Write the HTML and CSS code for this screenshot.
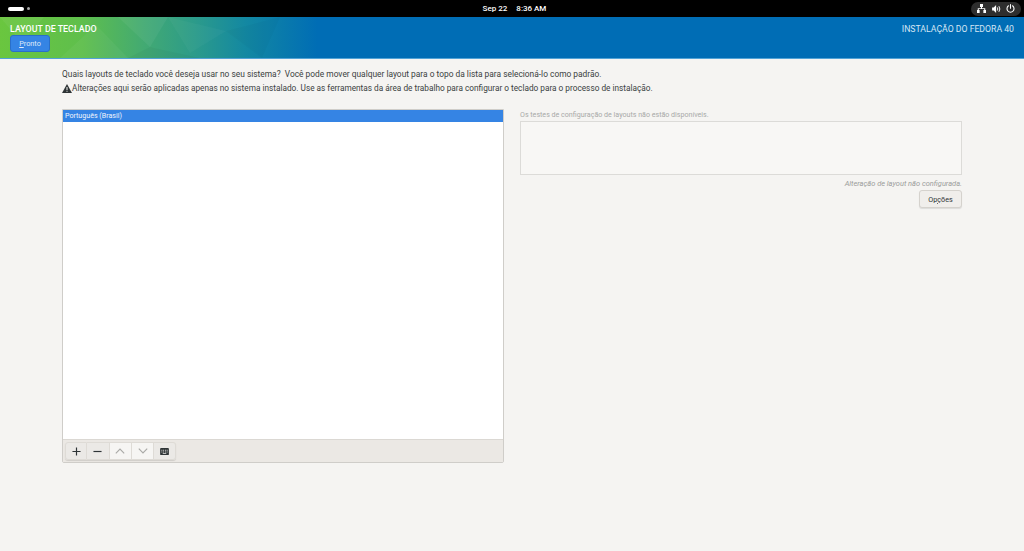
FILE: index.html
```html
<!DOCTYPE html>
<html lang="pt-BR">
<head>
    <meta charset="UTF-8">
    <meta name="viewport" content="width=device-width, initial-scale=1.0">
    <title>Layout de teclado</title>
    <link rel="stylesheet" href="styles.css">
</head>
<body>

    <!-- GNOME top bar -->
    <div class="topbar">
        <div class="workspaces"><span class="ws-active"></span><span class="ws-dot"></span></div>
        <div class="clock"><span>Sep 22</span><span>8:36 AM</span></div>
        <div class="tray">
            <svg width="9" height="9" viewBox="0 0 12 12"><path fill="#fff" d="M4 0h4v4H6.700v1.500H11V8h1v4H8.500V8h1.100V6.800H2.400V8h1.100v4H0V8h1V5.500h4.300V4H4z"/></svg>
            <svg width="9" height="8" viewBox="0 0 11 10"><path fill="#fff" d="M0 3h2l3-3v10L2 7H0z"/><path fill="none" stroke="#fff" stroke-width="1.200" d="M6.500 3q1.300 2 0 4M8.500 1.500q2.400 3.500 0 7"/></svg>
            <svg width="9" height="9" viewBox="0 0 11 11"><path fill="none" stroke="#fff" stroke-width="1.300" stroke-linecap="round" d="M5.500 .8v4.400M3 2.200a4.300 4.300 0 1 0 5 0"/></svg>
        </div>
    </div>

    <!-- Header -->
    <div class="header">
        <!-- faint polygon texture of the sidebar artwork -->
        <svg class="header-art" width="320" height="41" viewBox="0 0 320 41">
            <polygon fill="#fff" fill-opacity="0.05" points="0,0 44,0 22,26"/>
            <polygon fill="#fff" fill-opacity="0.04" points="60,41 96,8 128,41"/>
            <polygon fill="#fff" fill-opacity="0.05" points="118,0 168,0 150,30"/>
            <polygon fill="#000" fill-opacity="0.03" points="150,30 200,41 128,41"/>
            <polygon fill="#fff" fill-opacity="0.03" points="168,0 226,14 190,36"/>
            <polygon fill="#000" fill-opacity="0.025" points="226,14 280,0 262,41"/>
        </svg>
        <div class="header-left">
            <div class="title">LAYOUT DE TECLADO</div>
            <button class="done-button"><u>P</u>ronto</button>
        </div>
        <div class="product">INSTALAÇÃO DO FEDORA 40</div>
    </div>

    <div class="content">
        <p class="intro">Quais layouts de teclado você deseja usar no seu sistema?&nbsp; Você pode mover qualquer layout para o topo da lista para selecioná-lo como padrão.</p>
        <p class="intro warning">
            <svg class="warn-icon" width="10" height="9" viewBox="0 0 10 9"><path fill="#2e3436" d="M5 0l5 9H0z"/><path fill="#f5f4f2" d="M4.500 3h1v3h-1zM4.500 6.800h1v1h-1z"/></svg>
            <span>Alterações aqui serão aplicadas apenas no sistema instalado. Use as ferramentas da área de trabalho para configurar o teclado para o processo de instalação.</span>
        </p>

        <div class="columns">
            <!-- Layout list -->
            <div class="layout-panel">
                <div class="layout-list">
                    <div class="layout-row selected">Português (Brasil)</div>
                </div>
                <div class="toolbar">
                    <div class="tool-group">
                        <button class="tool-button">
                            <svg width="9" height="9" viewBox="0 0 10 10"><path stroke="#2e3436" stroke-width="1.300" d="M5 .5v9M.5 5h9"/></svg>
                        </button>
                        <button class="tool-button">
                            <svg width="9" height="9" viewBox="0 0 10 10"><path stroke="#2e3436" stroke-width="1.300" d="M.5 5h9"/></svg>
                        </button>
                        <button class="tool-button disabled">
                            <svg width="10" height="6" viewBox="0 0 10 6"><path fill="none" stroke="#a9a9a6" stroke-width="1.100" d="M.8 5.400L5 1l4.200 4.400"/></svg>
                        </button>
                        <button class="tool-button disabled">
                            <svg width="10" height="6" viewBox="0 0 10 6"><path fill="none" stroke="#a9a9a6" stroke-width="1.100" d="M.8 .6L5 5l4.200-4.400"/></svg>
                        </button>
                        <button class="tool-button">
                            <svg width="9" height="7" viewBox="0 0 10 8"><path fill="#2e3436" fill-rule="evenodd" d="M1 0h8a1 1 0 0 1 1 1v6a1 1 0 0 1-1 1H1a1 1 0 0 1-1-1V1a1 1 0 0 1 1-1zM1.500 2v1h1V2zm2 0v1h1V2zm2 0v1h1V2zm2 0v1h1V2zm-6 2v1h1V4zm2 0v1h1V4zm2 0v1h1V4zm2 0v1h1V4zM3 6v.800h4V6z"/></svg>
                        </button>
                    </div>
                </div>
            </div>

            <!-- Layout test -->
            <div class="test-panel">
                <div class="test-label">Os testes de configuração de layouts não estão disponíveis.</div>
                <div class="test-box"></div>
                <div class="switch-note">Alteração de layout não configurada.</div>
                <button class="options-button">Op<u>ç</u>ões</button>
            </div>
        </div>
    </div>

</body>
</html>
```

FILE: styles.css
```css
* {
    box-sizing: border-box;
}

html, body {
    height: 100%;
}

body {
    margin: 0;
    font-family: 'Roboto', 'Open Sans', sans-serif;
    background-color: #f5f4f2;
    color: #2e3436;
    overflow: hidden;
}

button {
    font-family: inherit;
    padding: 0;
}

/* Top bar */
.topbar {
    height: 17px;
    background-color: #000;
    color: #fff;
    display: grid;
    grid-template-columns: 1fr auto 1fr;
    align-items: center;
    padding: 0 3px 0 8px;
}

.workspaces {
    display: flex;
    align-items: center;
    gap: 3px;
}

.ws-active {
    width: 16px;
    height: 4px;
    border-radius: 2px;
    background-color: #fff;
}

.ws-dot {
    width: 3px;
    height: 3px;
    border-radius: 50%;
    background-color: #aaa;
}

.clock {
    display: flex;
    gap: 9px;
    font-size: 8px;
    font-weight: 500;
}

.tray {
    justify-self: end;
    width: 50px;
    height: 14px;
    border-radius: 7px;
    background-color: #2e2e2e;
    display: flex;
    align-items: center;
    justify-content: space-between;
    padding: 0 6px;
}

/* Header */
.header {
    position: relative;
    height: 42px;
    display: flex;
    justify-content: space-between;
    padding: 6px 10px 0;
    border-bottom: 1px solid #52a3d6;
    background-color: #006db5;
    background-image: linear-gradient(90deg, #6ac63f 0, #5fbf4c 8%, #43aa72 14%, #2c9b8a 19%, #1388a2 24%, #006db5 31%);
}

.header-art {
    position: absolute;
    top: 0;
    left: 0;
}

.header-left, .product {
    position: relative;
}

.title {
    font-size: 8.900px;
    font-weight: 500;
    color: #fff;
    line-height: 12px;
}

.done-button {
    display: block;
    width: 40px;
    height: 17px;
    border: 1px solid #2a6fc9;
    border-radius: 3px;
    background-color: #3584e4;
    color: #dfeafa;
    font-size: 7.300px;
}

.product {
    font-size: 8.700px;
    color: #d4e6f4;
    line-height: 12px;
}

/* Content */
.content {
    padding: 10px 62px 0;
}

.intro {
    margin: 0 0 3px;
    font-size: 8.400px;
    line-height: 11px;
    color: #3a3f41;
}

.warning {
    display: flex;
    align-items: center;
    font-size: 8.250px;
}

.warn-icon {
    flex: none;
}

.columns {
    display: grid;
    grid-template-columns: 442px 442px;
    gap: 16px;
    margin-top: 15px;
}

/* Left side */
.layout-panel {
    height: 354px;
    display: flex;
    flex-direction: column;
    border: 1px solid #cfcdc9;
    border-radius: 0 0 2px 2px;
}

.layout-list {
    flex: 1;
    background-color: #fff;
}

.layout-row {
    height: 12px;
    padding-left: 2px;
    font-size: 7.100px;
    line-height: 12px;
}

.layout-row.selected {
    background-color: #3584e4;
    color: #f0f5fc;
}

.toolbar {
    height: 23px;
    display: flex;
    align-items: flex-start;
    padding: 2px 2px 0;
    background-color: #ebe8e4;
    border-top: 1px solid #dbd8d3;
}

.tool-group {
    display: flex;
    border-radius: 3px;
    box-shadow: 0 1px 1px rgba(0, 0, 0, 0.12);
}

.tool-button {
    width: 22.300px;
    height: 18px;
    display: flex;
    align-items: center;
    justify-content: center;
    border: 1px solid #dedbd6;
    border-left-width: 0;
    background-color: #ebe9e6;
}

.tool-button:first-child {
    border-left-width: 1px;
    border-radius: 3px 0 0 3px;
}

.tool-button:last-child {
    border-radius: 0 3px 3px 0;
}

.tool-button.disabled {
    background-color: #f6f5f3;
}

/* Right side */
.test-panel {
    display: flex;
    flex-direction: column;
}

.test-label {
    font-size: 7.100px;
    line-height: 11px;
    color: #a8a9a8;
}

.test-box {
    height: 54px;
    margin-top: 1px;
    background-color: #f8f7f5;
    border: 1px solid #dcdbd8;
}

.switch-note {
    margin-top: 3px;
    text-align: right;
    font-size: 7.450px;
    font-style: italic;
    line-height: 11px;
    color: #9b9c9b;
}

.options-button {
    align-self: flex-end;
    width: 43px;
    height: 18px;
    margin-top: 1px;
    border: 1px solid #d5d2cd;
    border-radius: 3px;
    background-color: #f0eeeb;
    box-shadow: 0 1px 1px rgba(0, 0, 0, 0.1);
    color: #2e3436;
    font-size: 7.200px;
}
```
